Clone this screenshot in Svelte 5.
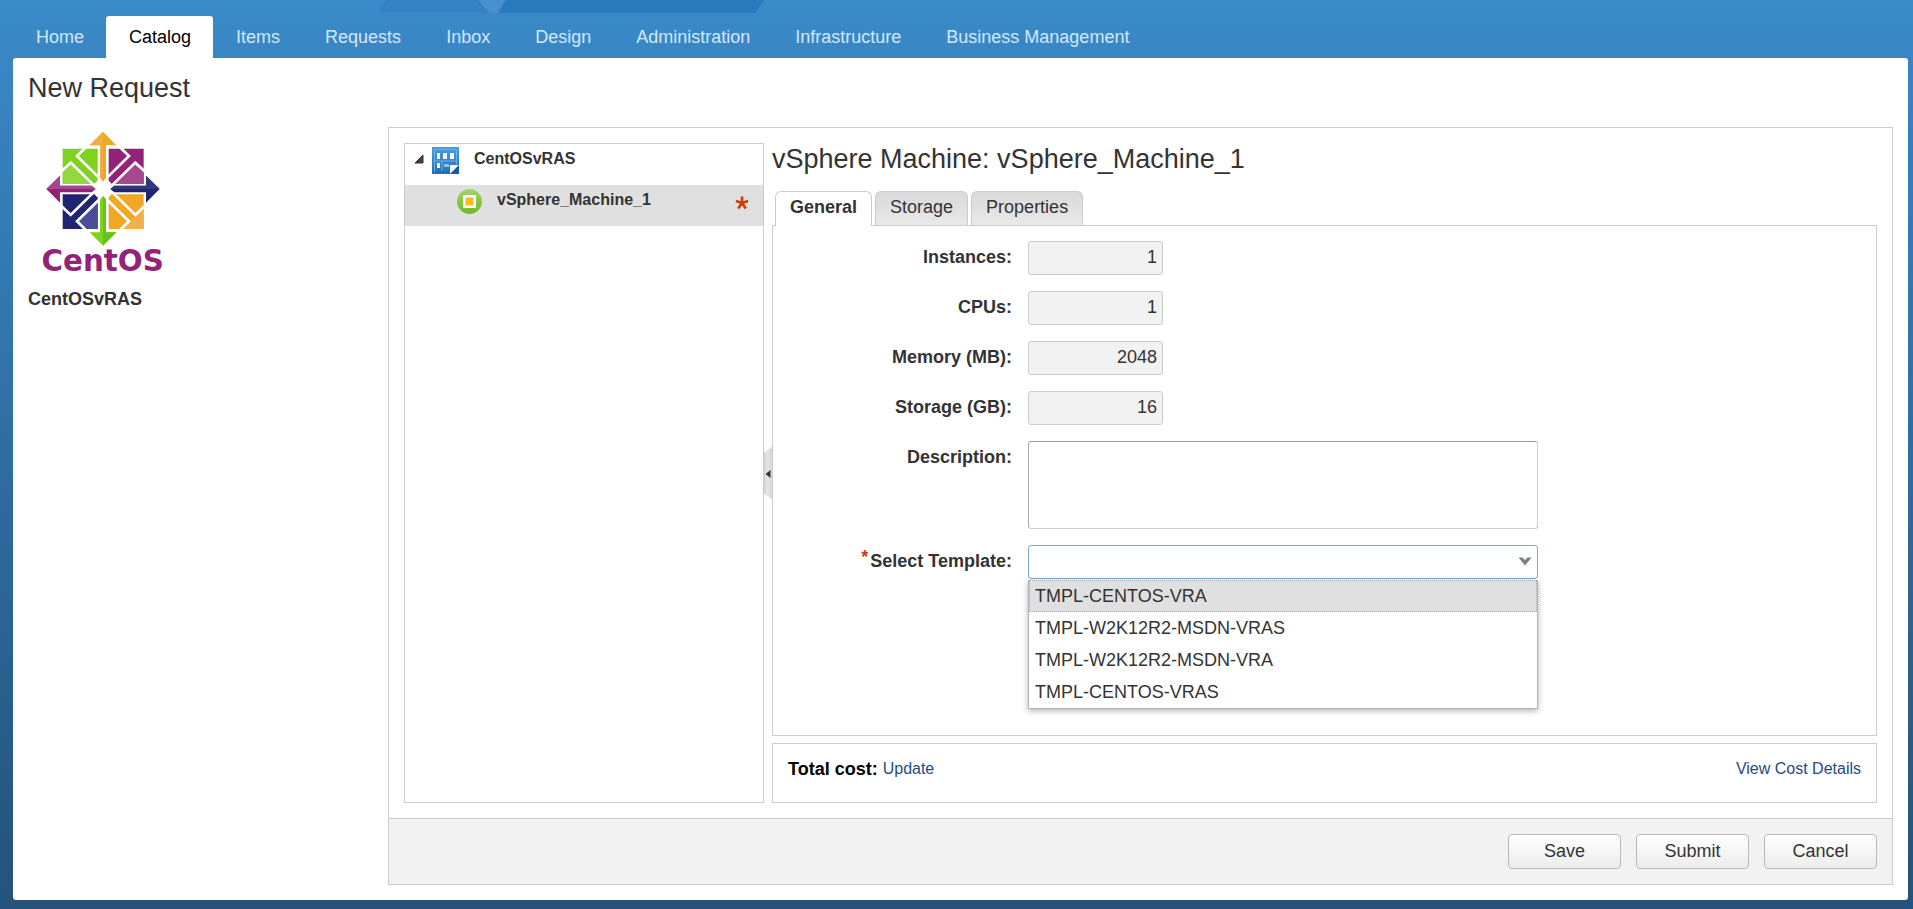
<script>
  const navItems = ['Home', 'Catalog', 'Items', 'Requests', 'Inbox', 'Design', 'Administration', 'Infrastructure', 'Business Management'];
  const tabs = ['General', 'Storage', 'Properties'];
  const metrics = [
    { id: 'instances', label: 'Instances:', value: '1' },
    { id: 'cpus', label: 'CPUs:', value: '1' },
    { id: 'memory', label: 'Memory (MB):', value: '2048' },
    { id: 'storage', label: 'Storage (GB):', value: '16' }
  ];
  const templates = ['TMPL-CENTOS-VRA', 'TMPL-W2K12R2-MSDN-VRAS', 'TMPL-W2K12R2-MSDN-VRA', 'TMPL-CENTOS-VRAS'];

  let activeNav = $state('Catalog');
  let activeTab = $state('General');
  let template = $state('');
  let highlighted = $state(0);
  let open = $state(true);

  function toggleList(event) {
    event.preventDefault();
    open = !open;
  }

  function choose(name) {
    template = name;
    open = false;
  }
</script>

<div class="page">
  <svg class="ribbon" width="390" height="13" viewBox="0 0 390 13" aria-hidden="true">
    <path d="M8 0H100L112 13H0Z" fill="#3582c2" />
    <path d="M100 0H128L120 13H112Z" fill="#4590cd" />
    <path d="M128 0H386L377 13H120Z" fill="#2979bd" />
  </svg>

  <nav class="nav">
    {#each navItems as item}
      <a href="#{item}" class:active={item === activeNav} onclick={() => (activeNav = item)}>{item}</a>
    {/each}
  </nav>

  <main class="workspace">
    <h1>New Request</h1>
    <div class="columns">
      <aside class="summary">
        <svg class="logo" width="126" height="148" viewBox="0 0 378 444" role="img" aria-label="CentOS">
          <g transform="translate(-61 -24)">
            <path d="M129 83H234V188H129Z" fill="#7ed321" />
            <path d="M129 150L153 125L220 188H129Z" fill="#93d83f" />
            <path d="M267 83H372V188H267Z" fill="#932279" />
            <path d="M372 150L347 125L280 188H372Z" fill="#a6488f" />
            <path d="M129 220H234V324H129Z" fill="#212470" />
            <path d="M205 324L174 301L234 240V324Z" fill="#4b4e94" />
            <path d="M267 220H372V324H267Z" fill="#efa724" />
            <path d="M372 256V324H296Q340 306 372 256Z" fill="#f1b04a" />
            <g fill="none" stroke="#fff" stroke-width="8">
              <path d="M202 76L172 105L240 172M122 154L153 125L224 194" />
              <path d="M298 76L328 105L260 172M378 154L347 125L276 194" />
              <path d="M202 330L172 301L240 234M122 252L153 282L224 212" />
              <path d="M298 330L328 301L260 234M378 252L347 282L276 212" />
            </g>
            <circle cx="250" cy="204" r="30" fill="#fff" />
            <path d="M250 32L290 73H259V170L250 182L241 170V73H210Z" fill="#efa724" />
            <path d="M250 32L210 73H241V170L250 182Z" fill="#f1ae40" />
            <path d="M250 374L290 334H259V236L250 225L241 236V334H210Z" fill="#7ed321" />
            <path d="M250 374L290 334H259V236L250 225Z" fill="#65c315" />
            <path d="M80 204L121 164V194H216L228 204L216 214H121V245Z" fill="#932279" />
            <path d="M80 204L121 164V194H216L228 204Z" fill="#a6488f" />
            <path d="M420 204L379 164V194H284L272 204L284 214H379V245Z" fill="#212470" />
            <path d="M420 204L379 164V194H284L272 204Z" fill="#34377f" />
            <text x="249" y="450" text-anchor="middle" font-family="DejaVu Sans, sans-serif" font-weight="700" font-size="88" fill="#932279">CentOS</text>
          </g>
        </svg>
        <p>CentOSvRAS</p>
      </aside>

      <section class="request">
        <div class="body">
          <div class="tree" role="tree" aria-label="Request components">
            <div class="node" role="treeitem" aria-selected="false" tabindex="-1">
              <svg class="twisty" width="10" height="10" viewBox="0 0 10 10" aria-hidden="true">
                <path d="M9 1V9H1Z" fill="#444" stroke="#333" />
              </svg>
              <svg class="blueprint" width="27" height="27" viewBox="0 0 27 27" aria-hidden="true">
                <defs>
                  <linearGradient id="blueprint-fill" x1="0" y1="0" x2="0" y2="1">
                    <stop offset="0" stop-color="#4a9ee0" />
                    <stop offset="1" stop-color="#1f6fb8" />
                  </linearGradient>
                </defs>
                <rect width="27" height="27" fill="url(#blueprint-fill)" />
                <path d="M2.500 24.500V2.500H24.500V17M3 14H24M10 14V24" fill="none" stroke="#6db2e9" />
                <path d="M5 6H8V12H5ZM11 6H15V12H11ZM18 6H22V12H18ZM5 16H8V21H5Z" fill="#f4faff" />
                <path d="M12 17H17V20H12Z" fill="#8cc3ef" />
                <path d="M27 17V27H17Z" fill="#1a5893" />
                <path d="M18 27V18H27Z" fill="#f4f8fb" />
              </svg>
              <span class="name">CentOSvRAS</span>
            </div>
            <div class="node child selected" role="treeitem" aria-selected="true" tabindex="0">
              <svg class="machine" width="25" height="25" viewBox="0 0 25 25" aria-hidden="true">
                <defs>
                  <linearGradient id="machine-fill" x1="0" y1="0" x2="0" y2="1">
                    <stop offset="0" stop-color="#a5d36a" />
                    <stop offset="1" stop-color="#6dbb22" />
                  </linearGradient>
                </defs>
                <circle cx="12.500" cy="12.500" r="12.500" fill="url(#machine-fill)" />
                <rect x="6" y="6" width="13" height="13" rx="1" fill="#fff" />
                <rect x="8.500" y="8.500" width="8" height="8" fill="#fbb928" />
              </svg>
              <span class="name">vSphere_Machine_1</span>
              <svg class="flag" width="14" height="14" viewBox="0 0 14 14" aria-label="Required" role="img">
                <path d="M7 7V0.500M7 7L0.900 5M7 7L3.200 12.500M7 7L10.800 12.500M7 7L13.100 5" stroke="#cf3a0b" stroke-width="2.600" />
              </svg>
            </div>
          </div>

          <div class="splitter">
            <button type="button" aria-label="Collapse tree">
              <svg width="6" height="8" viewBox="0 0 6 8" aria-hidden="true"><path d="M5.500 0V8L0.500 4Z" fill="#333" /></svg>
            </button>
          </div>

          <div class="details">
            <h2>vSphere Machine: vSphere_Machine_1</h2>
            <div class="tabs" role="tablist">
              {#each tabs as tab}
                <button type="button" role="tab" aria-selected={tab === activeTab} class:active={tab === activeTab} onclick={() => (activeTab = tab)}>{tab}</button>
              {/each}
            </div>
            <form class="panel" id="machine-form" onsubmit={(event) => event.preventDefault()}>
              {#each metrics as metric}
                <label for={metric.id}>{metric.label}</label>
                <input class="number" id={metric.id} value={metric.value} readonly />
              {/each}
              <label for="description">Description:</label>
              <textarea class="wide" id="description"></textarea>
              <label for="template"><sup>*</sup>Select Template:</label>
              <div class="combo wide">
                <select id="template" bind:value={template} onmousedown={toggleList}>
                  <option value=""></option>
                  {#each templates as name}
                    <option value={name}>{name}</option>
                  {/each}
                </select>
                <svg class="chevron" width="14" height="9" viewBox="0 0 14 9" aria-hidden="true">
                  <path d="M0.500 0.500H4.500L7 3L9.500 0.500H13.500L7 8.500Z" fill="#808080" />
                </svg>
                {#if open}
                  <ul role="listbox" aria-label="Templates">
                    {#each templates as name, index}
                      <li>
                        <button type="button" role="option" aria-selected={index === highlighted} class:highlighted={index === highlighted} onmouseenter={() => (highlighted = index)} onclick={() => choose(name)}>{name}</button>
                      </li>
                    {/each}
                  </ul>
                {/if}
              </div>
            </form>
            <div class="cost">
              <strong>Total cost:</strong>
              <a href="#update">Update</a>
              <a class="more" href="#details">View Cost Details</a>
            </div>
          </div>
        </div>

        <footer>
          <button type="button">Save</button>
          <button type="submit" form="machine-form">Submit</button>
          <button type="button">Cancel</button>
        </footer>
      </section>
    </div>
  </main>
</div>

<style>
  .page, .page :global(*) {
    box-sizing: border-box;
  }

  .page {
    position: relative;
    display: flex;
    flex-direction: column;
    min-height: 100vh;
    padding: 16px 5px 9px 13px;
    background: linear-gradient(#3a8bc9, #3984c2 8%, #24527a);
    color: #333;
    font: 18px/20px "Liberation Sans", Arial, sans-serif;
  }

  button, input, select, textarea {
    margin: 0;
    color: inherit;
    font: inherit;
  }

  .ribbon {
    position: absolute;
    top: 0;
    left: 378px;
  }

  .nav {
    display: flex;
  }

  .nav a {
    padding: 0 22px 0 23px;
    border-radius: 3px 3px 0 0;
    color: #d3e8fa;
    line-height: 42px;
    text-decoration: none;
    white-space: nowrap;
  }

  .nav a.active {
    background: #fff;
    color: #000;
  }

  .workspace {
    display: flex;
    flex: 1;
    flex-direction: column;
    padding: 0 15px 15px;
    border-radius: 3px;
    background: #fff;
  }

  h1, h2 {
    margin: 0;
    font-size: 27px;
    font-weight: 400;
  }

  h1 {
    padding: 14px 0 23px;
    line-height: 32px;
  }

  .columns {
    display: flex;
    flex: 1;
  }

  .summary {
    flex: 0 0 360px;
    font-weight: 700;
  }

  .summary p {
    margin: 12px 0 0;
  }

  .logo {
    display: block;
    margin: 2px 0 0 12px;
    overflow: visible;
  }

  .request {
    display: flex;
    flex: 1;
    flex-direction: column;
    min-width: 0;
    border: 1px solid #ccc;
  }

  .body {
    display: flex;
    flex: 1;
    padding: 15px;
  }

  .tree {
    flex: 0 0 360px;
    border: 1px solid #ccc;
  }

  .node {
    display: flex;
    align-items: flex-start;
    height: 41px;
    padding: 3px 14px 0 9px;
    font-size: 16px;
    font-weight: 700;
  }

  .child {
    padding-left: 52px;
  }

  .selected {
    background: #e0e0e0;
  }

  .twisty {
    margin: 7px 8px 0 0;
  }

  .machine {
    margin-top: 1px;
  }

  .name {
    margin: 2px 0 0 15px;
    line-height: 20px;
  }

  .flag {
    margin: 8px 0 0 auto;
  }

  .splitter {
    display: flex;
    align-items: center;
    flex: 0 0 8px;
  }

  .splitter button {
    width: 8px;
    height: 53px;
    padding: 0;
    border: 0;
    background: linear-gradient(90deg, #d0d0d0, #e6e6e6 40%, #d6d6d6);
    clip-path: polygon(0 6px, 100% 0, 100% 100%, 0 47px);
    line-height: 8px;
  }

  .details {
    display: flex;
    flex: 1;
    flex-direction: column;
    min-width: 0;
  }

  h2 {
    padding-bottom: 16px;
    line-height: 32px;
  }

  .tabs {
    display: flex;
    gap: 3px;
    padding-left: 3px;
  }

  .tabs button {
    height: 34px;
    padding: 0 14px 4px;
    border: 1px solid #ccc;
    border-bottom: 0;
    border-radius: 6px 6px 0 0;
    background: linear-gradient(#d9d9d9, #e9e9e9);
  }

  .tabs .active {
    height: 35px;
    margin-bottom: -1px;
    padding-bottom: 5px;
    background: #fff;
    font-weight: 700;
    z-index: 1;
  }

  .panel {
    display: grid;
    flex: 1;
    grid-template-columns: 239px minmax(0, 1fr);
    gap: 16px;
    align-content: start;
    padding: 15px 15px 15px 0;
    border: 1px solid #ccc;
  }

  label {
    font-weight: 700;
    line-height: 32px;
    text-align: right;
  }

  sup {
    margin-right: 2px;
    color: #cf3a0b;
    font-size: 18px;
    line-height: 0;
    vertical-align: 4px;
  }

  .number {
    width: 135px;
    height: 34px;
    padding: 0 5px 2px;
    border: 1px solid #ccc;
    border-radius: 3px;
    background: #f2f2f2;
    text-align: right;
  }

  .wide {
    width: 100%;
    max-width: 510px;
  }

  textarea {
    display: block;
    height: 88px;
    padding: 5px;
    border: 1px solid #ccc;
    border-top-color: #999;
    border-left-color: #aaa;
    border-radius: 3px;
    resize: none;
  }

  .combo {
    position: relative;
    height: 34px;
  }

  select {
    width: 100%;
    height: 34px;
    padding: 0 30px 2px 6px;
    border: 1px solid #7ea9c9;
    border-radius: 3px;
    appearance: none;
    background: #fff;
  }

  .chevron {
    position: absolute;
    top: 12px;
    right: 6px;
    pointer-events: none;
  }

  ul {
    position: absolute;
    top: 35px;
    left: 0;
    z-index: 2;
    width: 100%;
    margin: 0;
    padding: 0;
    border: 1px solid #b3b3bb;
    border-top: 0;
    background: #fff;
    box-shadow: 0 2px 6px rgba(0, 0, 0, 0.3);
    list-style: none;
  }

  li button {
    display: block;
    width: 100%;
    height: 32px;
    padding: 0 5px;
    border: 1px dotted transparent;
    background: none;
    text-align: left;
  }

  li .highlighted {
    border-color: #aaa;
    background: #e0e0e0;
  }

  .cost {
    display: flex;
    gap: 5px;
    height: 60px;
    margin-top: 7px;
    padding: 15px;
    border: 1px solid #ccc;
  }

  strong {
    color: #000;
  }

  .cost a {
    color: #1f4b7d;
    font-size: 16px;
    text-decoration: none;
  }

  .cost .more {
    margin-left: auto;
  }

  footer {
    display: flex;
    justify-content: flex-end;
    gap: 15px;
    padding: 15px;
    border-top: 1px solid #ccc;
    background: #f2f2f2;
  }

  footer button {
    width: 113px;
    height: 35px;
    padding: 0 0 2px;
    border: 1px solid #b8b8b8;
    border-radius: 4px;
    background: linear-gradient(#fff, #ececec);
  }
</style>
